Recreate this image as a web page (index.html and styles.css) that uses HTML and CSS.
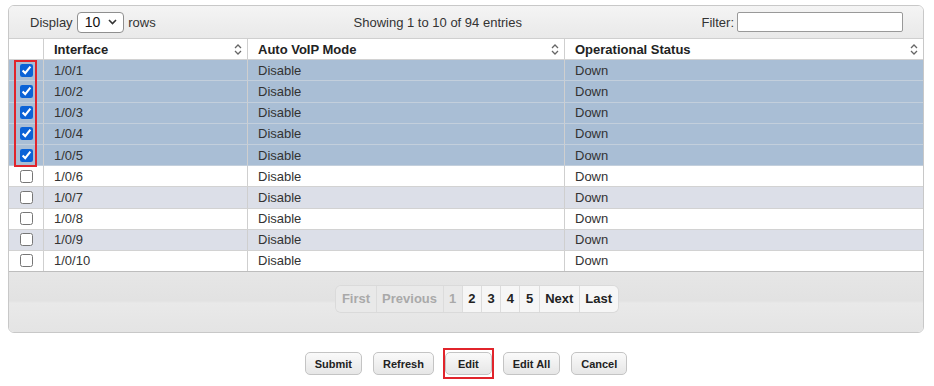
FILE: index.html
```html
<!DOCTYPE html>
<html lang="en">
<head>
    <meta charset="UTF-8">
    <title>Auto VoIP Interface Configuration</title>
    <link rel="stylesheet" href="styles.css">
</head>
<body>
    <div class="panel">
        <div class="toolbar">
            <div class="length">
                Display
                <span class="select">10
                    <svg width="9" height="6" viewBox="0 0 9 6"><path d="M1 1l3.5 3.5L8 1" fill="none" stroke="#333" stroke-width="1.6"/></svg>
                </span>
                rows
            </div>
            <div class="info">Showing 1 to 10 of 94 entries</div>
            <div class="filter">Filter: <input type="text" class="filter-input"></div>
        </div>

        <div class="table-wrap">
            <table class="grid">
                <thead>
                    <tr>
                        <th class="col-check"></th>
                        <th class="col-if">Interface <span class="sort"></span></th>
                        <th class="col-mode">Auto VoIP Mode <span class="sort"></span></th>
                        <th class="col-status">Operational Status <span class="sort"></span></th>
                    </tr>
                </thead>
                <tbody id="rows"></tbody>
            </table>
            <div class="mark-checks"></div>
        </div>

        <div class="footer">
            <div class="pager">
                <span class="page disabled">First</span>
                <span class="page disabled">Previous</span>
                <span class="page disabled">1</span>
                <span class="page">2</span>
                <span class="page">3</span>
                <span class="page">4</span>
                <span class="page">5</span>
                <span class="page">Next</span>
                <span class="page">Last</span>
            </div>
        </div>
    </div>

    <div class="actions">
        <button class="btn">Submit</button>
        <button class="btn">Refresh</button>
        <span class="mark-edit"><button class="btn btn-edit">Edit</button></span>
        <button class="btn">Edit All</button>
        <button class="btn">Cancel</button>
    </div>

    <script>
        const sortIcon = '<svg width="8" height="11" viewBox="0 0 8 11"><path d="M1 4l3-3 3 3M1 7l3 3 3-3" fill="none" stroke="#666" stroke-width="1.3"/></svg>';
        document.querySelectorAll('.sort').forEach(s => s.innerHTML = sortIcon);

        const body = document.getElementById('rows');
        for (let i = 1; i <= 10; i++) {
            const tr = document.createElement('tr');
            const selected = i <= 5;
            tr.className = selected ? 'selected' : (i % 2 === 0 ? 'odd' : 'even');
            tr.innerHTML =
                '<td class="col-check"><input type="checkbox"' + (selected ? ' checked' : '') + '></td>' +
                '<td>1/0/' + i + '</td><td>Disable</td><td>Down</td>';
            body.appendChild(tr);
        }
    </script>
</body>
</html>
```

FILE: styles.css
```css
body {
    margin: 0;
    padding: 5px 10px 0 8px;
    font-family: "Liberation Sans", Arial, sans-serif;
    font-size: 13px;
    color: #333;
    background: #fff;
}
.panel {
    border: 1px solid #c8c8c8;
    border-radius: 6px;
    overflow: hidden;
}
.toolbar {
    height: 32px;
    display: flex;
    align-items: center;
    justify-content: space-between;
    padding: 0 20px 0 21px;
    background: linear-gradient(#f4f4f4, #e9e9e9);
    border-bottom: 1px solid #cfcfcf;
}
.length {
    display: flex;
    align-items: center;
    gap: 4px;
    width: 210px;
}
.select {
    display: inline-flex;
    align-items: center;
    gap: 8px;
    height: 19px;
    padding: 0 6px 0 7px;
    border: 1px solid #8f8f8f;
    border-radius: 4px;
    background: #fff;
    font-size: 14px;
    color: #111;
}
.info {
    flex: 1;
    text-align: center;
    margin-right: 66px;
}
.filter {
    display: flex;
    align-items: center;
    gap: 3px;
}
.filter-input {
    width: 160px;
    height: 16px;
    border: 1px solid #999;
    border-radius: 2px;
    padding: 1px 2px;
}
.table-wrap {
    position: relative;
}
.grid {
    width: 100%;
    border-collapse: collapse;
    table-layout: fixed;
}
.grid th,
.grid td {
    height: 20.2px;
    padding: 0 10px;
    text-align: left;
    border-left: 1px solid #cfcfcf;
    border-bottom: 1px solid #d2d2d2;
    white-space: nowrap;
}
.grid th:first-child,
.grid td:first-child {
    border-left: none;
}
.grid th {
    background: #fff;
    color: #222;
    font-weight: bold;
    position: relative;
}
.col-check { width: 14px; }
.col-if { width: 183px; }
.col-mode { width: 296px; }
.grid td.col-check {
    padding: 0;
    text-align: center;
}
.grid td.col-check input {
    margin: 3px 0 0 1px;
    width: 13px;
    height: 13px;
    accent-color: #0b62d6;
}
.sort {
    position: absolute;
    right: 5px;
    top: 5px;
    line-height: 0;
}
tr.selected td { background: #a9bed5; border-bottom-color: #c3cfdc; }
tr.odd td { background: #fff; }
tr.even td { background: #dcdfe8; }
.grid tbody tr:last-child td { border-bottom: 1px solid #bdbdbd; }
.mark-checks {
    position: absolute;
    left: 5px;
    top: 21px;
    width: 19px;
    height: 103px;
    border: 2px solid #e1242b;
}
.footer {
    height: 60px;
    display: flex;
    align-items: center;
    justify-content: center;
    padding-left: 22px;
    background: linear-gradient(#e6e6e6, #e2e2e2 48%, #e9e9e9 52%, #e4e4e4);
}
.pager {
    display: flex;
    height: 26px;
    margin-bottom: 7px;
    border-radius: 5px;
    overflow: hidden;
    box-shadow: 0 0 0 1px #dadada;
}
.page {
    display: flex;
    align-items: center;
    padding: 0 5.5px;
    font-size: 13px;
    font-weight: bold;
    color: #222;
    background: #f6f6f6;
    border-left: 1px solid #dcdcdc;
}
.page:first-child { border-left: none; }
.page.disabled {
    color: #a9a9a9;
    background: #e9e9e9;
}
.actions {
    display: flex;
    justify-content: center;
    align-items: center;
    gap: 11px;
    margin-top: 15px;
}
.btn {
    height: 23px;
    padding: 0 9px;
    font-family: "Liberation Sans", Arial, sans-serif;
    font-size: 11px;
    font-weight: bold;
    color: #222;
    border: 1px solid #c4c4c4;
    border-radius: 5px;
    background: linear-gradient(#fafafa, #e6e6e6);
}
.btn-edit {
    padding: 0 12px;
}
.mark-edit {
    display: inline-flex;
    padding: 2px 0;
    border: 2px solid #e1242b;
    margin: 0 -2px;
}
```
